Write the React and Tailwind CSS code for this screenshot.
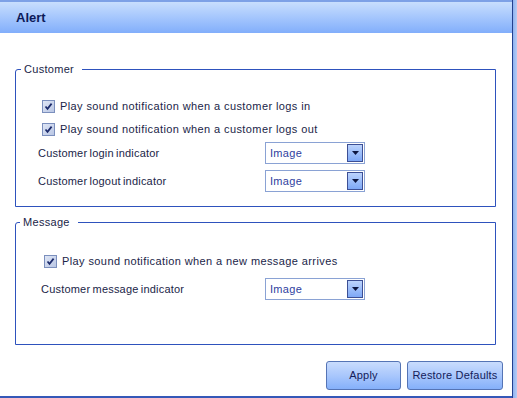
import React from "react";

const FONT = { fontFamily: '"Liberation Sans", Arial, sans-serif' };

// Small XP-style checked box
const Check = () => (
  <span className="flex h-[13px] w-[13px] shrink-0 items-center justify-center border border-[#7b8fbd] bg-gradient-to-br from-[#dfe6f5] to-[#b9c6e4]">
    <svg width="9" height="9" viewBox="0 0 9 9">
      <path d="M1.5 4.5 L3.5 6.8 L7.6 1.6" fill="none" stroke="#1b2a6b" strokeWidth="1.7" />
    </svg>
  </span>
);

const CheckRow = ({ label, indent }) => (
  <div className={`flex h-[20px] items-center gap-[5px] ${indent}`}>
    <Check />
    <span className="text-[11px] text-[#1a2548] tracking-[0.4px]">{label}</span>
  </div>
);

const Select = ({ value }) => (
  <div className="flex h-[22px] w-[100px] items-center justify-between border border-[#8aa2d4] bg-white pl-[4px] pr-[1px]">
    <span className="text-[11px] text-[#2f41a0] tracking-[0.3px]">{value}</span>
    <span className="flex h-[18px] w-[16px] items-center justify-center border border-[#3d4f94] bg-gradient-to-b from-[#bcd3fc] to-[#7ea8f6]">
      <svg width="7" height="4" viewBox="0 0 7 4">
        <path d="M0 0 H7 L3.5 4 Z" fill="#0d1640" />
      </svg>
    </span>
  </div>
);

const SelectRow = ({ label, indent, className = "" }) => (
  <div className={`flex h-[22px] items-center ${className}`}>
    <span className={`text-[11px] text-[#1a2548] tracking-[0.2px] [word-spacing:-1px] ${indent}`}>{label}</span>
    <div className="ml-auto mr-[129px]">
      <Select value="Image" />
    </div>
  </div>
);

const Btn = ({ children, w }) => (
  <button
    className={`h-[29px] ${w} rounded-[3px] border border-[#5574b5] bg-gradient-to-b from-[#c9dcfd] via-[#a9c7fc] to-[#85b0fa] text-[11px] tracking-[0.2px] text-[#14205a]`}
  >
    {children}
  </button>
);

const Legend = ({ children, ml }) => (
  <legend className={`${ml} pl-[3px] pr-[8px] text-[11px] leading-[14px] tracking-[0.3px] text-[#1a2548]`}>
    {children}
  </legend>
);

export default function App() {
  return (
    <div className="flex h-[398px] w-[517px] bg-white" style={FONT}>
      <div className="flex w-[513px] flex-col border-r border-[#23408f]">
        <div className="h-[2px] bg-[#7da1e6]" />
        <div className="flex h-[31px] items-center bg-gradient-to-b from-[#c8defd] to-[#82aefb] pl-[16px]">
          <span className="text-[13px] font-bold text-[#0c1a5a]">Alert</span>
        </div>

        <div className="flex-1 pl-[15px] pr-[16px]">
          {/* Customer */}
          <fieldset className="mt-[29px] rounded-tl-[3px] border border-[#2e52bd] px-px pb-[14px] pt-[20px]">
            <Legend ml="ml-[4px]">Customer</Legend>
            <CheckRow indent="ml-[25px]" label="Play sound notification when a customer logs in" />
            <div className="mt-[3px]">
              <CheckRow indent="ml-[25px]" label="Play sound notification when a customer logs out" />
            </div>
            <SelectRow className="mt-[3px]" indent="ml-[21px]" label="Customer login indicator" />
            <SelectRow className="mt-[6px]" indent="ml-[21px]" label="Customer logout indicator" />
          </fieldset>

          {/* Message */}
          <fieldset className="mt-[8px] rounded-tl-[3px] border border-[#2e52bd] px-px pb-[44px] pt-[22px]">
            <Legend ml="ml-[3px]">Message</Legend>
            <CheckRow indent="ml-[27px]" label="Play sound notification when a new message arrives" />
            <SelectRow className="mt-[7px]" indent="ml-[24px]" label="Customer message indicator" />
          </fieldset>

          <div className="-mr-[7px] mt-[16px] flex justify-end gap-[6px]">
            <Btn w="w-[75px]">Apply</Btn>
            <Btn w="w-[96px]">Restore Defaults</Btn>
          </div>
        </div>

        <div className="h-[2px] bg-[#3558b8]" />
      </div>
      <div className="w-[4px] bg-gradient-to-r from-[#8fb1ef] to-[#b6cdf5]" />
    </div>
  );
}
